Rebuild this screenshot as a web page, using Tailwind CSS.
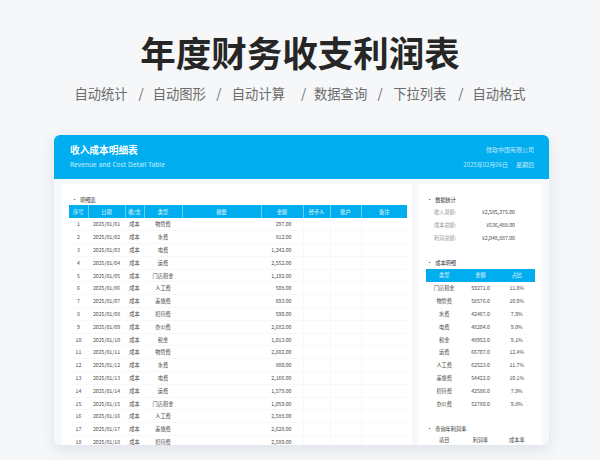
<!DOCTYPE html>
<html lang="zh-CN">
<head>
    <meta charset="UTF-8">
    <title>年度财务收支利润表</title>
    <script src="https://cdn.jsdelivr.net/npm/@tailwindcss/browser@4"></script>
</head>
<body class="w-[600px] h-[460px] overflow-hidden bg-[#f5f7f9] font-['Noto_Sans_CJK_SC','Noto_Sans',sans-serif]">
    <!-- Heading -->
    <div class="h-[135px] pt-[29px] flex flex-col items-center">
        <h1 class="text-[35.5px] leading-[46px] font-bold text-[#262626]">年度财务收支利润表</h1>
        <div class="mt-[9px] flex text-[13.3px] leading-[20px] text-[#6b6b6b]">
            <span>自动统计</span><span class="w-[25px] pl-[2px] text-center">/</span>
            <span>自动图形</span><span class="w-[26px] text-center">/</span>
            <span>自动计算</span><span class="w-[29px] pl-[8px] text-center">/</span>
            <span>数据查询</span><span class="w-[26px] text-center">/</span>
            <span>下拉列表</span><span class="w-[26px] pl-[3px] text-center">/</span>
            <span>自动格式</span>
        </div>
    </div>

    <!-- Card -->
    <div class="mx-[54px] w-[495px] h-[310px] flex flex-col overflow-hidden rounded-[6px] bg-[#f6f8fb] shadow-[0_4px_14px_rgba(60,80,110,0.12)]">
        <div class="h-[44px] shrink-0 bg-[#00aeef] pl-[16px] pr-[15px] pt-[8px] flex justify-between">
            <div>
                <div class="text-[9.7px] leading-[14px] font-bold text-white">收入成本明细表</div>
                <div class="mt-[1px] text-[6.3px] leading-[13px] tracking-[0.2px] font-['Noto_Sans',sans-serif] text-white/80">Revenue and Cost Detail Table</div>
            </div>
            <div class="text-right text-[6px] text-white/75">
                <div class="leading-[14px]">微软中国有限公司</div>
                <div class="mt-[1px] leading-[13px]">2025年02月06日<span class="ml-[8px]">星期四</span></div>
            </div>
        </div>

        <div class="flex-1 min-h-0 flex pt-[5px] pl-[8px] gap-[6px]">
            <!-- Detail table -->
            <div class="w-[350px] bg-white pt-[10px] pl-[7px] overflow-hidden">
                <div class="h-[11px] pl-[3px] text-[5.2px] leading-[11px] text-[#333] flex gap-[3px]"><span>•</span><span>明细表</span></div>
                <table class="w-[338px] table-fixed border-collapse text-[5.2px] text-[#4a4a4a]">
                    <colgroup>
                        <col class="w-[19px]"><col class="w-[37px]"><col class="w-[19px]"><col class="w-[38px]">
                        <col class="w-[79px]"><col class="w-[42px]"><col class="w-[27px]"><col class="w-[31px]"><col class="w-[46px]">
                    </colgroup>
                    <thead>
                        <tr class="h-[13px] bg-[#00aeef] text-white/90 font-normal">
                            <th class="font-normal border-r border-white/40">序号</th>
                            <th class="font-normal border-r border-white/40">日期</th>
                            <th class="font-normal border-r border-white/40">收/支</th>
                            <th class="font-normal border-r border-white/40">类型</th>
                            <th class="font-normal border-r border-white/40">摘要</th>
                            <th class="font-normal border-r border-white/40">金额</th>
                            <th class="font-normal border-r border-white/40">经手人</th>
                            <th class="font-normal border-r border-white/40">账户</th>
                            <th class="font-normal">备注</th>
                        </tr>
                    </thead>
                    <tbody id="detail-rows"></tbody>
                </table>
            </div>

            <!-- Side panel -->
            <div class="w-[124px] bg-white pt-[10px] px-[8px] text-[5.2px] overflow-hidden">
                <div class="h-[11px] pl-[1px] leading-[11px] text-[#333] flex gap-[3px]"><span>•</span><span>数据统计</span></div>
                <div class="mt-[0.5px] text-[#4a4a4a]">
                    <div class="h-[12.8px] flex items-center"><span class="w-[8px]"></span><span class="w-[45px] text-[#999]">收入总额:</span><span class="w-[36px] text-right">¥2,585,375.00</span></div>
                    <div class="h-[12.8px] flex items-center"><span class="w-[8px]"></span><span class="w-[45px] text-[#999]">成本总额:</span><span class="w-[36px] text-right">¥536,488.00</span></div>
                    <div class="h-[12.8px] flex items-center"><span class="w-[8px]"></span><span class="w-[45px] text-[#999]">利润总额:</span><span class="w-[36px] text-right">¥2,048,887.00</span></div>
                </div>

                <div class="mt-[13px] h-[11px] pl-[1px] leading-[11px] text-[#333] flex gap-[3px]"><span>•</span><span>成本明细</span></div>
                <div class="mt-[1px] w-[109px] h-[13px] bg-[#00aeef] text-white/90 grid grid-cols-3 items-center text-center"><span>类型</span><span>金额</span><span>占比</span></div>
                <div id="cost-rows" class="text-[#4a4a4a]"></div>

                <div class="mt-[13px] h-[11px] pl-[1px] leading-[11px] text-[#333] flex gap-[3px]"><span>•</span><span>查询年利润率</span></div>
                <div class="w-[109px] h-[13px] text-[#4a4a4a] grid grid-cols-3 items-center text-center"><span>项目</span><span>利润率</span><span>成本率</span></div>
            </div>
        </div>
    </div>

    <script>
        const types = ['物管费', '水费', '电费', '运费', '门店租金', '人工费', '差旅费', '招待费', '办公费', '税金'];
        const amounts = ['297.00', '812.00', '1,242.00', '2,552.00', '1,192.00', '508.00', '693.00', '590.00', '2,682.00', '1,013.00',
            '2,602.00', '800.00', '2,166.00', '1,579.00', '1,059.00', '2,588.00', '2,628.00', '2,589.00'];

        document.getElementById('detail-rows').innerHTML = amounts.map((amount, i) => {
            const day = String(i + 1).padStart(2, '0');
            return `<tr class="h-[12.8px] border-b border-[#f7f8fa] text-center">
                <td>${i + 1}</td>
                <td>2025/01/${day}</td>
                <td>成本</td>
                <td>${types[i % 10]}</td>
                <td></td>
                <td class="text-right pr-[11px]">${amount}</td>
                <td class="border-l border-[#f7f8fa]"></td>
                <td class="border-l border-[#f7f8fa]"></td>
                <td class="border-l border-[#f7f8fa]"></td>
            </tr>`;
        }).join('');

        const costs = [['门店租金', '59271.0', '11.0%'], ['物管费', '58576.0', '10.9%'], ['水费', '42467.0', '7.9%'], ['电费', '48204.0', '9.0%'],
            ['税金', '48952.0', '9.1%'], ['运费', '66707.0', '12.4%'], ['人工费', '62523.0', '11.7%'], ['差旅费', '54422.0', '10.1%'],
            ['招待费', '42586.0', '7.9%'], ['办公费', '52780.0', '9.8%']];

        document.getElementById('cost-rows').innerHTML = costs.map(c =>
            `<div class="w-[109px] h-[12.8px] grid grid-cols-3 items-center text-center"><span>${c[0]}</span><span>${c[1]}</span><span>${c[2]}</span></div>`
        ).join('');
    </script>
</body>
</html>
